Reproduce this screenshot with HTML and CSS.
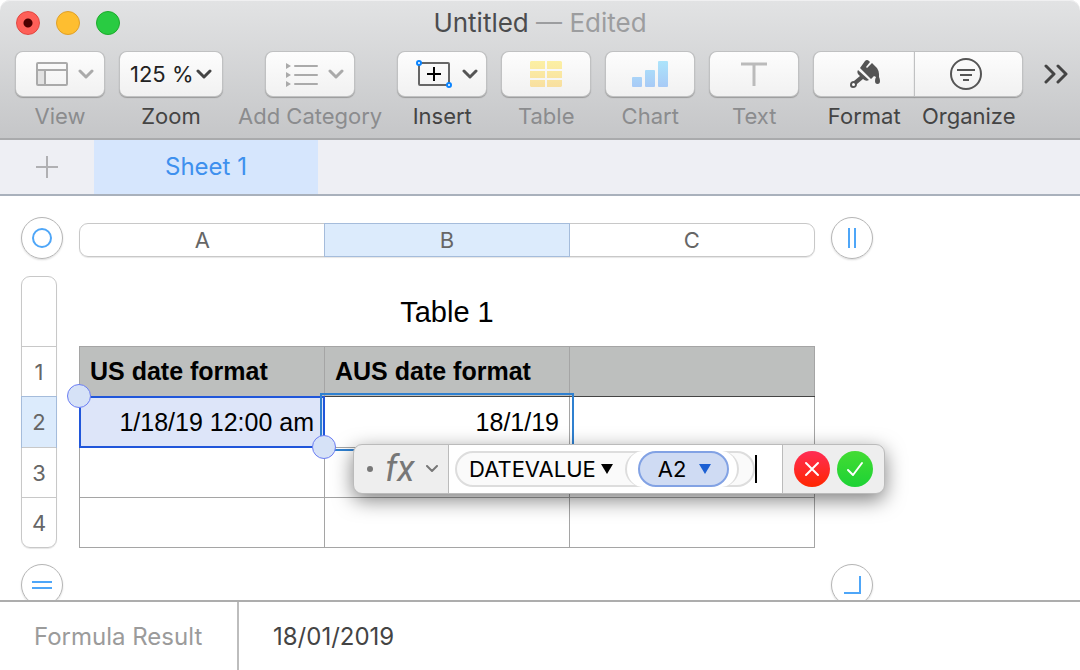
FILE: index.html
```html
<!DOCTYPE html>
<html lang="en">

<head>
    <meta charset="utf-8">
    <meta name="viewport" content="width=device-width">
    <title>Untitled</title>
    <link rel="stylesheet" href="styles.css">
</head>

<body>
    <div class="window">
        <header class="chrome">
            <div class="titlebar">
                <div class="lights">
                    <button class="light close" aria-label="Close"></button>
                    <button class="light minimize" aria-label="Minimize"></button>
                    <button class="light maximize" aria-label="Zoom window"></button>
                </div>
                <h1 class="title">Untitled <span>— Edited</span></h1>
            </div>
            <div class="toolbar">
                <button class="tool" disabled>
                    <span class="face menu">
                        <svg width="32" height="24" viewBox="0 0 32 24" fill="none" stroke="#aaa" stroke-width="2">
                            <rect x="2" y="9" width="7" height="14" fill="#e2e2e2" stroke="none" />
                            <rect x="1" y="1" width="30" height="22" rx="1" />
                            <path d="M1 8H31M9 8V23" />
                        </svg>
                        <svg width="16" height="10" viewBox="0 0 16 10" fill="none" stroke="#aaa" stroke-width="3" stroke-linecap="round" stroke-linejoin="round"><path d="M2 2L8 8L14 2" /></svg>
                    </span>
                    <span class="label">View</span>
                </button>
                <div class="tool">
                    <div class="face zoom">
                        <select id="zoom">
                            <option>125 %</option>
                        </select>
                        <svg class="zoom-arrow" width="16" height="10" viewBox="0 0 16 10" fill="none" stroke="#444" stroke-width="3" stroke-linecap="round" stroke-linejoin="round"><path d="M2 2L8 8L14 2" /></svg>
                    </div>
                    <label class="label" for="zoom">Zoom</label>
                </div>
                <button class="tool" disabled>
                    <span class="face menu">
                        <svg width="32" height="25" viewBox="0 0 32 25" stroke="#aaa" stroke-width="2" stroke-linecap="round">
                            <path d="M9 4H31M9 13H31M9 22H31" />
                            <path d="M0 1L5 4L0 7ZM0 10L5 13L0 16ZM0 19L5 22L0 25Z" fill="#aaa" stroke="none" />
                        </svg>
                        <svg width="16" height="10" viewBox="0 0 16 10" fill="none" stroke="#aaa" stroke-width="3" stroke-linecap="round" stroke-linejoin="round"><path d="M2 2L8 8L14 2" /></svg>
                    </span>
                    <span class="label">Add Category</span>
                </button>
                <button class="tool">
                    <span class="face menu">
                        <svg width="36" height="28" viewBox="0 0 36 28" fill="none">
                            <rect x="3" y="3" width="30" height="22" rx="1" stroke="#666" stroke-width="2" />
                            <path d="M11 14H25M18 7V21" stroke="#000" stroke-width="2" />
                            <circle cx="3" cy="3" r="2" fill="#fff" stroke="#0a84ff" stroke-width="2" />
                            <circle cx="33" cy="25" r="2" fill="#fff" stroke="#0a84ff" stroke-width="2" />
                        </svg>
                        <svg width="16" height="10" viewBox="0 0 16 10" fill="none" stroke="#555" stroke-width="3" stroke-linecap="round" stroke-linejoin="round"><path d="M2 2L8 8L14 2" /></svg>
                    </span>
                    <span class="label">Insert</span>
                </button>
                <button class="tool" disabled>
                    <span class="face">
                        <svg width="32" height="26" viewBox="0 0 32 26">
                            <defs>
                                <linearGradient id="gold" x1="0" y1="0" x2="0" y2="26" gradientUnits="userSpaceOnUse">
                                    <stop offset="0" stop-color="#fcf0a4" />
                                    <stop offset="1" stop-color="#f8dfa0" />
                                </linearGradient>
                            </defs>
                            <path fill="url(#gold)" d="M1 0H15V8H0V1ZM17 0H31L32 1V8H17ZM0 10H15V17H0ZM17 10H32V17H17ZM0 19H15V26H1L0 25ZM17 19H32V25L31 26H17Z" />
                        </svg>
                    </span>
                    <span class="label">Table</span>
                </button>
                <button class="tool" disabled>
                    <span class="face">
                        <svg width="36" height="26" viewBox="0 0 36 26">
                            <defs>
                                <linearGradient id="sky" x1="0" y1="0" x2="0" y2="26" gradientUnits="userSpaceOnUse">
                                    <stop offset="0" stop-color="#ace4fb" />
                                    <stop offset="1" stop-color="#a8caf6" />
                                </linearGradient>
                            </defs>
                            <g fill="url(#sky)">
                                <rect x="0" y="16" width="10" height="10" rx="1" />
                                <rect x="13" y="9" width="10" height="17" rx="1" />
                                <rect x="26" y="0" width="10" height="26" rx="1" />
                            </g>
                        </svg>
                    </span>
                    <span class="label">Chart</span>
                </button>
                <button class="tool" disabled>
                    <span class="face">
                        <svg width="26" height="24" viewBox="0 0 26 24" fill="none" stroke="#bbb" stroke-width="3">
                            <path d="M0 2H26M13 2V24" />
                        </svg>
                    </span>
                    <span class="label">Text</span>
                </button>
                <div class="pair">
                    <button class="tool">
                        <span class="face">
                            <svg width="32" height="30" viewBox="0 0 32 30" fill="#555">
                                <path d="M12 9L17 2Q19 0 21 2L22 3L18 8L19 9L24 4L29 9Q31 12 31 15V18Q32 20 32 22Q32 25 29.500 25Q27 25 27 22Q27 20 28 18L26 17L23 20Z" />
                                <path d="M10 11L21 21Q18 23 15 20L9 25Q9 29 5 29Q2 29 2 26Q2 22 6 22L12 17Q8 14 10 11Z" />
                                <circle cx="5.500" cy="25.500" r="1.500" fill="#fff" />
                            </svg>
                        </span>
                        <span class="label">Format</span>
                    </button>
                    <button class="tool">
                        <span class="face">
                            <svg width="32" height="32" viewBox="0 0 32 32" fill="none" stroke="#555" stroke-width="2">
                                <circle cx="16" cy="16" r="15" />
                                <path d="M7 12H25M10 17H22M13 22H19" />
                            </svg>
                        </span>
                        <span class="label">Organize</span>
                    </button>
                </div>
                <button class="more" aria-label="More tools">
                    <svg width="24" height="20" viewBox="0 0 24 20" fill="none" stroke="#444" stroke-width="3" stroke-linecap="round" stroke-linejoin="round">
                        <path d="M2 2L10 10L2 18M14 2L22 10L14 18" />
                    </svg>
                </button>
            </div>
        </header>

        <nav class="tabs">
            <button class="add" aria-label="Add sheet">
                <svg width="22" height="22" viewBox="0 0 22 22" stroke="#b0b0b3" stroke-width="2"><path d="M11 0V22M0 11H22" /></svg>
            </button>
            <a class="tab" href="#">Sheet 1</a>
        </nav>

        <main class="canvas">
            <button class="knob" aria-label="Select table">
                <svg width="20" height="20" viewBox="0 0 20 20" fill="none" stroke="#4ea6f8" stroke-width="2"><circle cx="10" cy="10" r="9" /></svg>
            </button>
            <div class="cols">
                <button>A</button>
                <button class="on">B</button>
                <button>C</button>
            </div>
            <button class="knob" aria-label="Add column">
                <svg width="20" height="20" viewBox="0 0 20 20" fill="none" stroke="#4ea6f8" stroke-width="2"><path d="M7 0V20M13 0V20" /></svg>
            </button>

            <div class="rows">
                <button aria-label="Title"></button>
                <button>1</button>
                <button class="on">2</button>
                <button>3</button>
                <button>4</button>
            </div>
            <div class="sheet">
                <table>
                    <caption>Table 1</caption>
                    <thead>
                        <tr>
                            <th>US date format</th>
                            <th>AUS date format</th>
                            <th></th>
                        </tr>
                    </thead>
                    <tbody>
                        <tr class="current">
                            <td class="picked">1/18/19 12:00 am<i class="dot start"></i><i class="dot end"></i></td>
                            <td class="editing">18/1/19</td>
                            <td></td>
                        </tr>
                        <tr>
                            <td></td>
                            <td></td>
                            <td></td>
                        </tr>
                        <tr>
                            <td></td>
                            <td></td>
                            <td></td>
                        </tr>
                    </tbody>
                </table>
                <div class="editor">
                    <button class="fx" aria-label="Formula options">
                        <span class="grip"></span>
                        <em>fx</em>
                        <svg width="12" height="8" viewBox="0 0 12 8" fill="none" stroke="#777" stroke-width="2" stroke-linecap="round" stroke-linejoin="round"><path d="M1 1L6 6L11 1" /></svg>
                    </button>
                    <div class="formula">
                        <div class="func">
                            <button class="name">DATEVALUE
                                <svg width="12" height="10" viewBox="0 0 12 10"><path d="M0 0H12L6 10Z" /></svg>
                            </button>
                            <div class="arg">
                                <button class="ref">A2
                                    <svg width="12" height="10" viewBox="0 0 12 10" fill="#1c60d3"><path d="M0 0H12L6 10Z" /></svg>
                                </button>
                            </div>
                        </div>
                        <input class="entry" type="text" aria-label="Formula">
                    </div>
                    <div class="actions">
                        <button class="cancel" aria-label="Cancel">
                            <svg width="16" height="16" viewBox="0 0 16 16" fill="none" stroke="#fff" stroke-width="2" stroke-linecap="round"><path d="M2 2L14 14M14 2L2 14" /></svg>
                        </button>
                        <button class="accept" aria-label="Accept">
                            <svg width="18" height="16" viewBox="0 0 18 16" fill="none" stroke="#fff" stroke-width="2" stroke-linecap="round" stroke-linejoin="round"><path d="M2 9L7 14L16 2" /></svg>
                        </button>
                    </div>
                </div>
            </div>

            <button class="knob below" aria-label="Add row">
                <svg width="20" height="20" viewBox="0 0 20 20" fill="none" stroke="#4ea6f8" stroke-width="2"><path d="M0 7H20M0 13H20" /></svg>
            </button>
            <button class="knob corner" aria-label="Resize table">
                <svg width="20" height="20" viewBox="0 0 20 20" fill="none" stroke="#4ea6f8" stroke-width="2"><path d="M2 18H18V1" /></svg>
            </button>
        </main>

        <footer class="result">
            <span class="result-label">Formula Result</span>
            <output>18/01/2019</output>
        </footer>
    </div>
</body>

</html>
```

FILE: styles.css
```css
* {
    box-sizing: border-box;
}

body {
    margin: 0;
    background: #fff;
    font-family: Inter, "Liberation Sans", sans-serif;
    font-size: 22px;
    color: #444;
}

button,
select,
input {
    margin: 0;
    padding: 0;
    border: 0;
    background: none;
    font: inherit;
    color: inherit;
}

svg {
    display: block;
    flex: none;
}

.window {
    display: flex;
    flex-direction: column;
    height: 100vh;
    overflow: hidden;
}

/* title bar and toolbar */

.chrome {
    height: 140px;
    border-bottom: 2px solid #a9aaac;
    border-radius: 10px 10px 0 0;
    background: linear-gradient(#e2e3e4, #c5c6c8);
    box-shadow: inset 0 1px #f0f0f1;
}

.titlebar {
    display: grid;
    grid-template-columns: 1fr auto 1fr;
    align-items: center;
    height: 45px;
    padding: 0 16px;
}

.lights {
    display: flex;
    gap: 16px;
}

.light {
    width: 24px;
    height: 24px;
    border-radius: 50%;
}

.close {
    border: 1px solid #e2463f;
    background: radial-gradient(#4d0000 4px, #fe5f58 5px);
}

.minimize {
    border: 1px solid #e0a028;
    background: #febe30;
}

.maximize {
    border: 1px solid #1dab2c;
    background: #29cb42;
}

.title {
    margin: 0;
    font-size: 26px;
    font-weight: 400;
    line-height: 30px;
    color: #4b4c4e;
}

.title span {
    color: #9c9d9f;
}

.toolbar {
    display: flex;
    align-items: flex-start;
    gap: 16px;
    padding: 7px 12px 0 16px;
}

.tool {
    display: flex;
    flex-direction: column;
    align-items: center;
    gap: 6px;
    white-space: nowrap;
}

.face {
    display: flex;
    align-items: center;
    justify-content: center;
    gap: 10px;
    width: 88px;
    height: 44px;
    border-radius: 7px;
    background: linear-gradient(#fdfdfd, #f1f1f1);
    box-shadow: 0 0 0 1px #c0c1c2, 0 1px 1px 1px #999;
}

.menu {
    padding-left: 10px;
}

.label {
    line-height: 28px;
}

.tool:disabled .label {
    color: #8b8c8e;
}

.zoom {
    position: relative;
    width: 102px;
}

.zoom select {
    width: 100%;
    height: 100%;
    padding-left: 10px;
    appearance: none;
    color: #222;
}

.zoom-arrow {
    position: absolute;
    right: 10px;
    pointer-events: none;
}

.pair {
    display: flex;
    gap: 1px;
}

.pair .face {
    width: 100px;
    border-radius: 7px 0 0 7px;
}

.pair .tool + .tool .face {
    width: 107px;
    padding-right: 6px;
    border-radius: 0 7px 7px 0;
}

.more {
    margin-left: auto;
    padding: 12px 0;
}

/* sheet tabs */

.tabs {
    display: flex;
    height: 56px;
    border-bottom: 2px solid #a9b1bc;
    background: #eeeff4;
}

.add {
    display: flex;
    align-items: center;
    justify-content: center;
    width: 94px;
}

.tab {
    width: 224px;
    background: #d6e6fd;
    color: #3e90ee;
    font-size: 24px;
    line-height: 54px;
    text-align: center;
    text-decoration: none;
}

/* canvas: row and column bars round the table */

.canvas {
    flex: 1;
    display: grid;
    grid-template-columns: 42px minmax(0, 736px) 42px;
    grid-template-rows: 43px auto 43px;
    gap: 16px;
    align-content: start;
    min-height: 0;
    padding: 21px;
    overflow: hidden;
}

.knob {
    display: flex;
    align-items: center;
    justify-content: center;
    width: 42px;
    height: 42px;
    border: 1px solid #b5b5b5;
    border-radius: 50%;
    box-shadow: 0 1px 2px rgba(0, 0, 0, .15);
}

.below {
    grid-column: 1;
}

.corner {
    grid-column: 3;
}

.cols {
    display: grid;
    grid-template-columns: repeat(3, 1fr);
    height: 34px;
    margin-top: 6px;
    border: 1px solid #c8c8c8;
    border-radius: 9px;
    box-shadow: 0 1px 1px rgba(0, 0, 0, .1);
    color: #666;
}

.cols .on {
    margin: -1px;
    border: 1px solid #a5bcdb;
    background: #dcebfc;
}

.rows {
    display: grid;
    grid-template-rows: 69px 50px 51px 50px 50px;
    width: 36px;
    border: 1px solid #c8c8c8;
    border-radius: 9px;
    box-shadow: 0 1px 1px rgba(0, 0, 0, .1);
    color: #666;
}

.rows button + button {
    border-top: 1px solid #c8c8c8;
}

.rows button.on {
    margin: 0 -1px -1px;
    border: 1px solid #a5bcdb;
    background: #dcebfc;
}

.sheet {
    position: relative;
    color: #000;
    font-family: "Liberation Sans", Arial, sans-serif;
}

table {
    width: 100%;
    border-collapse: collapse;
    table-layout: fixed;
    font-size: 25px;
}

caption {
    height: 70px;
    font-size: 29px;
    line-height: 72px;
}

th,
td {
    position: relative;
    height: 50px;
    padding: 0 10px;
    border: 1px solid #a5a5a5;
    text-align: right;
    white-space: nowrap;
}

th {
    border-bottom-color: #444;
    background: #bdbfbe;
    text-align: left;
}

.current td {
    height: 51px;
}

.picked {
    background: #dde5f9;
}

.picked::after {
    content: "";
    position: absolute;
    inset: -1px;
    border: 2px solid #2056da;
}

.editing::after {
    content: "";
    position: absolute;
    inset: -4px -5px;
    border: 2px solid #2f80d0;
}

.dot {
    position: absolute;
    z-index: 1;
    width: 24px;
    height: 24px;
    border: 1px solid #6b7df3;
    border-radius: 50%;
    background: #d6e2f7;
}

.start {
    top: -13px;
    left: -13px;
}

.end {
    right: -12px;
    bottom: -12px;
}

/* formula editor, floats over the cells */

.editor {
    position: absolute;
    z-index: 2;
    top: 168px;
    left: 274px;
    display: flex;
    width: 532px;
    height: 50px;
    border: 1px solid #bbb;
    border-radius: 9px;
    background: #eee;
    box-shadow: 0 6px 20px rgba(0, 0, 0, .5);
    font-family: Inter, "Liberation Sans", sans-serif;
}

.fx {
    flex: none;
    display: flex;
    align-items: center;
    gap: 12px;
    width: 94px;
    padding-left: 13px;
    color: #777;
}

.fx em {
    font-family: Roboto, sans-serif;
    font-size: 36px;
    line-height: 48px;
}

.grip {
    width: 6px;
    height: 6px;
    border-radius: 50%;
    background: #777;
}

.formula {
    flex: 1;
    display: flex;
    align-items: center;
    min-width: 0;
    border: solid #bbb;
    border-width: 0 1px;
    padding-left: 6px;
    background: #fff;
    color: #000;
}

.func {
    display: flex;
    align-items: center;
    height: 36px;
    padding: 0 14px 0 12px;
    border: 2px solid #ddd;
    border-radius: 18px;
    background: #fafafa;
}

.name,
.ref {
    display: flex;
    align-items: center;
    gap: 5px;
}

.arg {
    margin-left: 12px;
    padding: 0 8px 0 11px;
    border: solid #ddd;
    border-width: 0 2px;
    border-radius: 18px;
    background: #fff;
}

.ref {
    gap: 13px;
    height: 36px;
    padding: 0 16px 0 18px;
    border: 2px solid #82a2e4;
    border-radius: 18px;
    background: #cfdbf3;
    box-shadow: 0 0 0 3px #fff;
}

.entry {
    flex: 1;
    width: 0;
    height: 28px;
    border-left: 2px solid #000;
    outline: 0;
}

.actions {
    display: flex;
    align-items: center;
    gap: 7px;
    padding: 0 11px;
}

.actions button {
    display: flex;
    align-items: center;
    justify-content: center;
    width: 36px;
    height: 36px;
    border-radius: 50%;
}

.cancel {
    background: linear-gradient(#ff2d55, #ff2600);
}

.accept {
    background: linear-gradient(#43dc33, #1dd235);
}

/* result bar */

.result {
    display: flex;
    height: 70px;
    border-top: 2px solid #adadad;
    font-size: 24px;
    line-height: 70px;
}

.result-label {
    width: 239px;
    padding-left: 34px;
    border-right: 2px solid #bdbdbd;
    color: #9b9b9b;
}

.result output {
    padding-left: 34px;
}
```
